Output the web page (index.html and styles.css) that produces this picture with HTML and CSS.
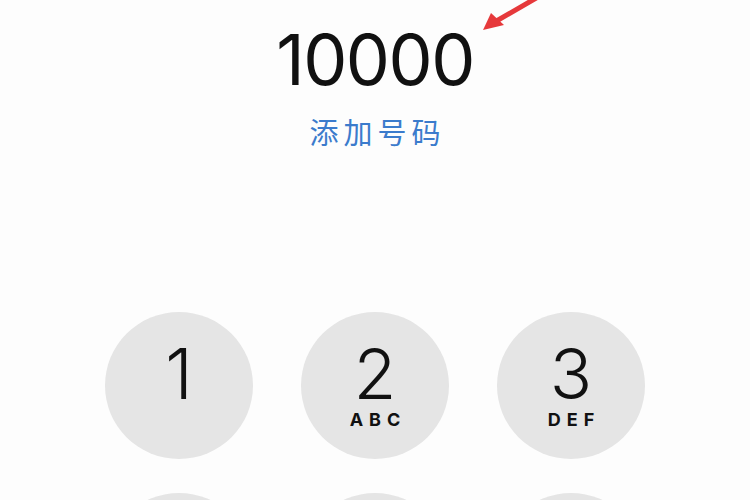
FILE: index.html
```html
<!DOCTYPE html>
<html lang="zh">
<head>
<meta charset="utf-8">
<link rel="stylesheet" href="styles.css">
</head>
<body>
<div class="screen">
  <div class="number">10000</div>
  <div class="add">添加号码</div>
  <div class="keypad">
    <div class="key"><span class="digit">1</span></div>
    <div class="key"><span class="digit">2</span><span class="letters">ABC</span></div>
    <div class="key"><span class="digit">3</span><span class="letters">DEF</span></div>
    <div class="key"><span class="digit">4</span><span class="letters">GHI</span></div>
    <div class="key"><span class="digit">5</span><span class="letters">JKL</span></div>
    <div class="key"><span class="digit">6</span><span class="letters">MNO</span></div>
  </div>
  <svg class="arrow" width="80" height="40" viewBox="470 0 80 40">
    <line x1="538" y1="-3" x2="493" y2="23" stroke="#e6393b" stroke-width="5" stroke-linecap="round"/>
    <polygon points="483,30 491,13 504,25" fill="#e6393b"/>
  </svg>
</div>
</body>
</html>
```
FILE: styles.css
```css
html, body {
  margin: 0;
  padding: 0;
  background: #fdfdfd;
}
.screen {
  position: relative;
  width: 750px;
  height: 500px;
  overflow: hidden;
  display: flex;
  flex-direction: column;
  align-items: center;
  font-family: Inter, "Noto Sans", sans-serif;
  color: #111;
}
.number {
  margin-top: 25px;
  font-size: 70px;
  line-height: 70px;
  font-weight: 400;
  letter-spacing: -1.5px;
}
.add {
  margin-top: 21px;
  font-family: "Noto Sans CJK SC", sans-serif;
  font-size: 29px;
  line-height: 30px;
  letter-spacing: 5px;
  padding-left: 5px;
  color: #3b7bcc;
}
.keypad {
  margin-top: 166px;
  display: grid;
  grid-template-columns: repeat(3, 148px);
  grid-auto-rows: 147px;
  column-gap: 48px;
  row-gap: 34px;
}
.key {
  border-radius: 50%;
  background: #e5e5e5;
  display: flex;
  flex-direction: column;
  align-items: center;
  justify-content: flex-start;
}
.digit {
  margin-top: 34px;
  font-size: 70px;
  line-height: 56px;
  font-weight: 300;
}
.letters {
  margin-top: 9px;
  font-size: 18px;
  line-height: 18px;
  font-weight: 700;
  letter-spacing: 6px;
  padding-left: 6px;
}
.arrow {
  position: absolute;
  left: 470px;
  top: 0;
}
```
